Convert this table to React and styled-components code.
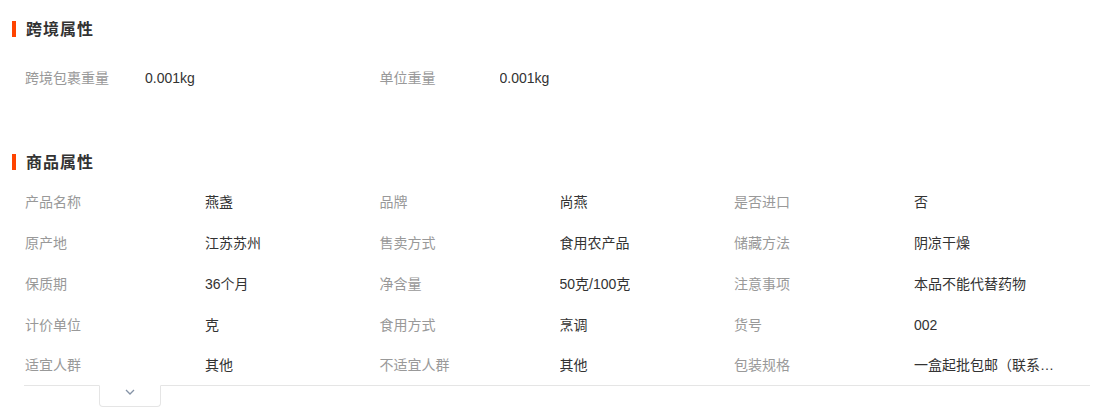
import React from "react";
import styled, { createGlobalStyle } from "styled-components";

const GlobalStyle = createGlobalStyle`
  html, body {
    margin: 0;
    padding: 0;
    background: #fff;
  }
  body {
    font-family: "Liberation Sans", "Noto Sans CJK SC", sans-serif;
    font-size: 14px;
    color: #333;
  }
`;

const Page = styled.div`
  padding: 21px 21px 0 25px;
  width: 1065px;
`;

const Section = styled.section`
  margin-top: ${(props) => props.$top || 0}px;
`;

const Title = styled.h2`
  display: flex;
  align-items: center;
  gap: 10px;
  margin: 0 0 0 -13px;
  height: 16px;
  font-size: 16px;
  line-height: 16px;
  font-weight: 700;
  color: #333;
  letter-spacing: 1px;

  &::before {
    content: "";
    width: 4px;
    height: 16px;
    background: #ff4400;
  }

  span {
    position: relative;
    top: 1px;
  }
`;

const Grid = styled.div`
  display: grid;
  grid-template-columns: repeat(3, 354.5px);
  grid-auto-rows: 41px;
  margin-top: ${(props) => props.$top}px;
`;

const GoodsGrid = styled(Grid)`
  grid-template-rows: repeat(4, 41px) 40px;
  margin-left: -1px;
  padding-left: 1px;
  border-bottom: 1px solid #e5e5e5;
`;

const Cell = styled.div`
  display: flex;
  align-items: center;
  min-width: 0;
`;

const Label = styled.span`
  flex: 0 0 ${(props) => props.$width}px;
  color: #999;
  line-height: 20px;
`;

const Value = styled.span`
  color: #333;
  line-height: 20px;
  max-width: 145px;
  white-space: nowrap;
  overflow: hidden;
  text-overflow: ellipsis;
`;

const Toggle = styled.button`
  display: flex;
  align-items: flex-start;
  justify-content: center;
  margin: -1px 0 0 74px;
  width: 62px;
  height: 22px;
  padding: 3px 0 0;
  background: #fff;
  border: 1px solid #e5e5e5;
  border-top-color: #fff;
  border-radius: 0 0 4px 4px;
  cursor: pointer;
`;

const crossItems = [
  ["跨境包裹重量", "0.001kg"],
  ["单位重量", "0.001kg"],
];

const goodsItems = [
  ["产品名称", "燕盏"],
  ["品牌", "尚燕"],
  ["是否进口", "否"],
  ["原产地", "江苏苏州"],
  ["售卖方式", "食用农产品"],
  ["储藏方法", "阴凉干燥"],
  ["保质期", "36个月"],
  ["净含量", "50克/100克"],
  ["注意事项", "本品不能代替药物"],
  ["计价单位", "克"],
  ["食用方式", "烹调"],
  ["货号", "002"],
  ["适宜人群", "其他"],
  ["不适宜人群", "其他"],
  ["包装规格", "一盒起批包邮（联系客服）"],
];

const App = () => (
  <>
    <GlobalStyle />
    <Page>
      <Section>
        <Title>
          <span>跨境属性</span>
        </Title>
        <Grid $top={20}>
          {crossItems.map(([k, v]) => (
            <Cell key={k}>
              <Label $width={120}>{k}</Label>
              <Value>{v}</Value>
            </Cell>
          ))}
        </Grid>
      </Section>

      <Section $top={56}>
        <Title>
          <span>商品属性</span>
        </Title>
        <GoodsGrid $top={11}>
          {goodsItems.map(([k, v]) => (
            <Cell key={k}>
              <Label $width={180}>{k}</Label>
              <Value title={v}>{v}</Value>
            </Cell>
          ))}
        </GoodsGrid>
        <Toggle aria-label="展开">
          <svg width="10" height="6" viewBox="0 0 10 6">
            <path d="M1 1l4 4 4-4" fill="none" stroke="#8593a6" strokeWidth="1.3" />
          </svg>
        </Toggle>
      </Section>
    </Page>
  </>
);

export default App;
